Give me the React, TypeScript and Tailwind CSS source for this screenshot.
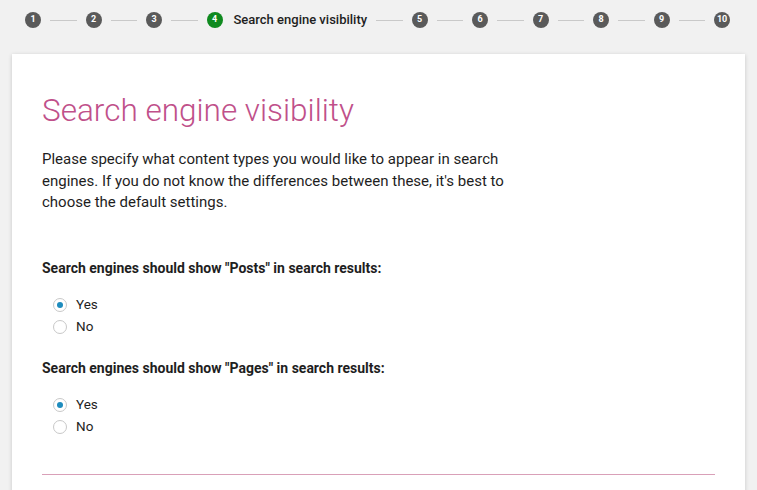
import { Fragment } from 'react';

const STEPS = ['1', '2', '3', '4', '5', '6', '7', '8', '9', '10'];
const ACTIVE = '4';

function StepDot({ label, active }: { label: string; active: boolean }) {
  return (
    <div
      className={
        'flex h-4 w-4 shrink-0 items-center justify-center rounded-full text-[9px] font-bold text-white ' +
        (active ? 'bg-[#0f8a1f]' : 'bg-[#5a5a5a]')
      }
    >
      {label}
    </div>
  );
}

function Radio({ checked, label }: { checked?: boolean; label: string }) {
  return (
    <label className="flex h-[22px] items-center gap-[9px] pl-[11px] text-[13.5px] text-[#1e1e1e]">
      <span className="flex h-[14px] w-[14px] items-center justify-center rounded-full border border-[#c8c8c8] bg-white">
        {checked && <span className="h-[6px] w-[6px] rounded-full bg-[#1e8cbe]" />}
      </span>
      {label}
    </label>
  );
}

function Question({ text }: { text: string }) {
  return (
    <div>
      <p className="text-[14px] font-bold leading-[20px] text-[#1e1e1e]">{text}</p>
      <div className="mt-[16px] flex flex-col">
        <Radio checked label="Yes" />
        <Radio label="No" />
      </div>
    </div>
  );
}

export default function App() {
  return (
    <div className="h-[490px] w-[757px] overflow-hidden bg-[#f1f1f1] font-['Roboto',sans-serif]">
      <div className="flex h-[40px] items-center pl-[25px]">
        {STEPS.map((s, i) => (
          <Fragment key={s}>
            {i > 0 && <div className="mx-[9px] h-px w-[26.5px] bg-[#c9c9c9]" />}
            <StepDot label={s} active={s === ACTIVE} />
            {s === ACTIVE && (
              <span className="ml-[11px] text-[13px] font-medium text-[#1e1e1e]">Search engine visibility</span>
            )}
          </Fragment>
        ))}
      </div>

      <div className="mx-[12px] mt-[14px] h-[460px] bg-white px-[30px] pt-[38px] shadow-[0_1px_4px_rgba(0,0,0,0.18)]">
        <h1 className="text-[31.5px] font-light leading-[38px] text-[#c0508a]">Search engine visibility</h1>
        <p className="mt-[19px] w-[475px] text-[15px] leading-[21.5px] text-[#1e1e1e]">
          Please specify what content types you would like to appear in search engines. If you do not know the
          differences between these, it's best to choose the default settings.
        </p>

        <div className="mt-[44px] flex flex-col gap-[20px]">
          <Question text={'Search engines should show "Posts" in search results:'} />
          <Question text={'Search engines should show "Pages" in search results:'} />
        </div>

        <div className="mt-[36px] h-px bg-[#d9a0b8]" />
      </div>
    </div>
  );
}
